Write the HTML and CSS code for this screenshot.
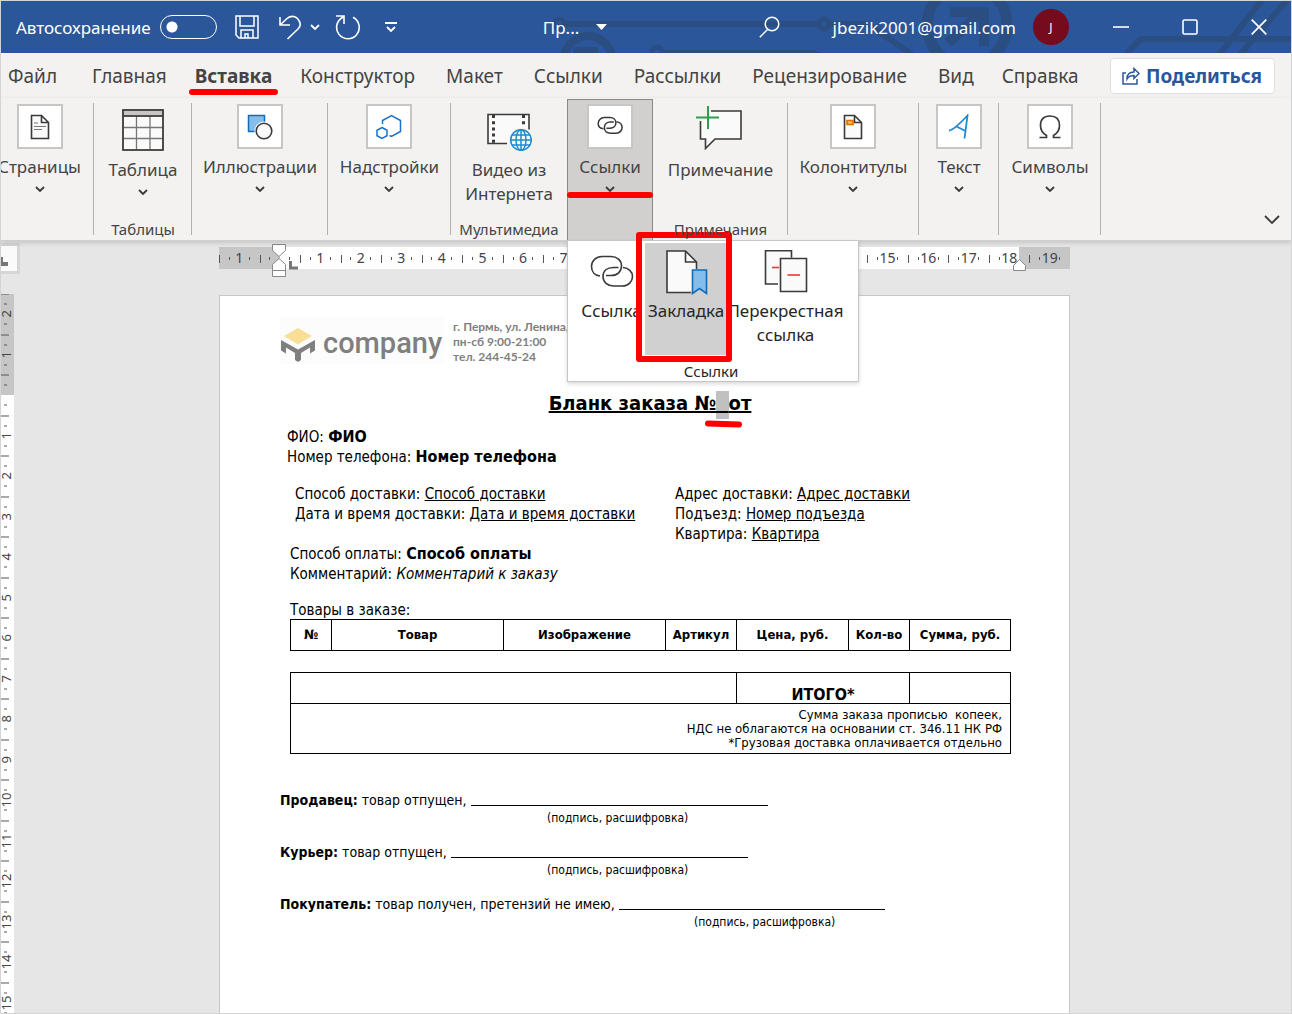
FILE: index.html
```html
<!DOCTYPE html>
<html lang="ru">
<head>
<meta charset="utf-8">
<meta name="viewport" content="width=device-width, initial-scale=1">
<title>Бланк заказа</title>
<link rel="stylesheet" href="styles.css">
</head>
<body>
<div class="app">
  <header class="titlebar">
    <svg class="circuit" width="760" height="52" viewBox="531 1 760 52" fill="none" stroke="#2a4d82" stroke-width="6" aria-hidden="true">
      <circle cx="559" cy="24" r="5" stroke-width="4"/><path d="M565 24H818"/><circle cx="824" cy="24" r="5" stroke-width="5"/><path d="M830 24h38l46 32"/>
      <circle cx="588" cy="60" r="24" stroke-width="8"/><path d="M573 50h25"/>
      <circle cx="657" cy="52" r="5" stroke-width="5"/><path d="M663 53H812q6 0 12 6"/>
      <circle cx="967" cy="25" r="40" stroke-width="11"/>
      <path d="M948 43L980 13M950 12h34v34" stroke-width="10"/>
      <path d="M1124 56l17-17H1291M1218 56L1262 0M1239 56L1287 0"/>
    </svg>
    <div class="quick">
      <label class="autosave">Автосохранение <input type="checkbox" class="toggle"></label>
      <button class="icon-btn save" aria-label="Сохранить"><svg width="24" height="24" viewBox="0 0 24 24" fill="none" stroke="#fff" stroke-width="1.5"><path d="M1 1h22v22H4l-3-3zM5 1v10h14V1M6 23v-8h12v8M10 23v-4h3v4"/></svg></button>
      <button class="icon-btn undo" aria-label="Отменить"><svg width="23" height="25" viewBox="0 0 23 25" fill="none" stroke="#fff" stroke-width="1.6"><path d="M1 2v8h10M1 10L8 3.500Q13 -.5 18 3Q24 9 19 14L8.500 24"/></svg></button>
      <button class="icon-btn more" aria-label="Список отмены"><svg width="10" height="7" viewBox="0 0 10 7" fill="none" stroke="#fff" stroke-width="1.8"><path d="M1 1l4 4 4-4"/></svg></button>
      <button class="icon-btn redo" aria-label="Повторить"><svg width="26" height="26" viewBox="0 0 26 26" fill="none" stroke="#fff" stroke-width="1.6"><path d="M1 2h8v8M8.500 3A11.300 11.300 0 1 0 18 3.300"/></svg></button>
      <button class="icon-btn customize" aria-label="Настройка панели"><svg width="12" height="10" viewBox="0 0 12 10" fill="none" stroke="#fff" stroke-width="1.8"><path d="M0 1h12M2 5l4 4 4-4"/></svg></button>
    </div>
    <button class="doc-title">Пр...<svg width="11" height="6" viewBox="0 0 11 6" fill="#fff"><path d="M0 0h11L5.500 6z"/></svg></button>
    <div class="account">
      <button class="icon-btn search" aria-label="Поиск"><svg width="21" height="22" viewBox="0 0 21 22" fill="none" stroke="#fff" stroke-width="1.5"><circle cx="13" cy="8" r="6.800"/><path d="M8.500 13.500L.8 21.200"/></svg></button>
      <span class="email">jbezik2001@gmail.com</span>
      <button class="avatar">J</button>
      <button class="icon-btn win-min" aria-label="Свернуть"><svg width="16" height="16" viewBox="0 0 16 16" stroke="#fff" stroke-width="1.6"><path d="M0 8h16"/></svg></button>
      <button class="icon-btn win" aria-label="Развернуть"><svg width="16" height="16" viewBox="0 0 16 16" fill="none" stroke="#fff" stroke-width="1.6"><rect x="1" y="1" width="14" height="14" rx="1.500"/></svg></button>
      <button class="icon-btn win" aria-label="Закрыть"><svg width="16" height="16" viewBox="0 0 16 16" stroke="#fff" stroke-width="1.700"><path d="M.7.7l14.600 14.600M15.300.7L.7 15.300"/></svg></button>
    </div>
  </header>

  <nav class="tabs">
    <button class="tab first">Файл</button>
    <button class="tab">Главная</button>
    <button class="tab active">Вставка</button>
    <button class="tab">Конструктор</button>
    <button class="tab wide">Макет</button>
    <button class="tab wide">Ссылки</button>
    <button class="tab wide">Рассылки</button>
    <button class="tab wide">Рецензирование</button>
    <button class="tab wide">Вид</button>
    <button class="tab">Справка</button>
    <button class="share"><svg width="18" height="18" viewBox="0 0 18 18" fill="none" stroke="#2b579a" stroke-width="1.500"><path d="M4 6H1v11h14v-5M5 12q0-7 7-7V1.500l5 5-5 5V8.500q-5 0-7 3.500z"/></svg>Поделиться</button>
  </nav>

  <div class="ribbon">
    <section class="group g-pages"><button class="cmd">
      <span class="box"><svg width="24" height="26" viewBox="0 0 24 26" fill="#fafafa" stroke="#3b3a39" stroke-width="1.6"><path d="M3.500 1.500h10l7 7v16h-17zM13.500 1.500v7h7"/><path d="M6 9h4M6 12.500h12M6 15.500h8" stroke="#797775" stroke-width="1.200"/></svg></span>
      <span>Страницы</span><svg class="chev" viewBox="0 0 10 6"><path d="M1 1l4 4 4-4"/></svg></button></section>
    <section class="group g-table"><button class="cmd big">
      <svg width="42" height="42" viewBox="0 0 42 42" fill="#fafafa" stroke="#797775" stroke-width="1.300"><path d="M1 1h40v40H1z"/><path d="M1 1h40v6H1z" fill="#c8c6c4"/><path d="M14.500 7v34M28 7v34M1 18.500h40M1 29.500h40"/><path d="M1 1h40v40H1zM1 7h40" fill="none" stroke="#3b3a39" stroke-width="1.600"/></svg>
      <span>Таблица</span><svg class="chev" viewBox="0 0 10 6"><path d="M1 1l4 4 4-4"/></svg></button><h2>Таблицы</h2></section>
    <section class="group g-illus"><button class="cmd">
      <span class="box"><svg width="26" height="26" viewBox="0 0 26 26"><path d="M1.500 1.500h16v16h-16z" fill="#83beec" stroke="#0f6cbd" stroke-width="1.500"/><circle cx="17" cy="17" r="9.500" fill="#fff"/><circle cx="17" cy="17" r="7.800" fill="#fafafa" stroke="#3b3a39" stroke-width="1.600"/></svg></span>
      <span>Иллюстрации</span><svg class="chev" viewBox="0 0 10 6"><path d="M1 1l4 4 4-4"/></svg></button></section>
    <section class="group g-addins"><button class="cmd">
      <span class="box"><svg width="26" height="26" viewBox="0 0 26 26" fill="none" stroke="#1a73c8" stroke-width="1.500"><path d="M6.500 10V6.500L15.500 1.500l9 5v11l-9 5-2-1M6 13.500l5 2.800v5.400l-5 2.800-5-2.800v-5.400z"/></svg></span>
      <span>Надстройки</span><svg class="chev" viewBox="0 0 10 6"><path d="M1 1l4 4 4-4"/></svg></button></section>
    <section class="group g-media"><button class="cmd big">
      <svg width="46" height="42" viewBox="0 0 46 42" fill="none"><path d="M21 34.500H2V5.500h41v15" fill="#fafafa" stroke="#3b3a39" stroke-width="1.600"/><path d="M7.500 6v29M37.500 6v11" stroke="#3b3a39" stroke-width="3" stroke-dasharray="3 3.200"/><circle cx="35" cy="31" r="12" fill="#f3f2f1"/><g stroke="#1e8bcd" stroke-width="1.500"><circle cx="35" cy="31" r="10.300" fill="#fafafa"/><ellipse cx="35" cy="31" rx="5" ry="10.300"/><path d="M35 20.500v21M24.500 31h21M26 26h18M26 36h18"/></g></svg>
      <span>Видео из<br>Интернета</span></button><h2>Мультимедиа</h2></section>
    <section class="group g-links"><button class="cmd" aria-expanded="true">
      <span class="box"><svg width="26" height="26" viewBox="0 0 44 44" fill="none" stroke="#3b3a39" stroke-width="2.600"><path d="M11 25C5 24.500 2 20.500 2 16S6 6 12 6h10c6 0 10 4 10 9s-4 9-10 9h-6"/><path d="M33 13c5.500.5 9.500 4.500 9.500 9.500s-4 10-10 10h-10c-6 0-10-4-10-9.500s4-9.500 10-9.500h6"/></svg></span>
      <span>Ссылки</span><svg class="chev" viewBox="0 0 10 6"><path d="M1 1l4 4 4-4"/></svg></button>
      <i class="mark"></i>
      <div class="popup">
        <div class="popup-items">
          <button class="item link"><svg width="44" height="44" viewBox="0 0 44 44" fill="none" stroke="#3b3a39" stroke-width="1.600"><path d="M10 26C5 25.500 1.500 22 1.500 16.500S6 6.500 12 6.500h9c6 0 10.500 4 10.500 9.500s-4 9.500-10.500 9.500h-5"/><path d="M33 17.500c5.500.5 9.500 4 9.500 9s-4 9.500-10 9.500h-9c-6 0-10.500-4-10.500-9.500s4-9 10.500-9h5"/></svg><span>Ссылка</span></button>
          <button class="item bookmark"><svg width="44" height="46" viewBox="0 0 44 46"><path d="M3 2h19l10 11V43H3z" fill="#fafafa"/><path d="M27 43.500H3V2h18.500l11 11V20M21.500 2v11h11" fill="none" stroke="#3b3a39" stroke-width="1.600"/><path d="M28.500 21h14v23.500l-7-5-7 5z" fill="#83beec" stroke="#0f6cbd" stroke-width="1.600"/></svg><span>Закладка</span></button>
          <button class="item cross"><svg width="44" height="44" viewBox="0 0 44 44" fill="#fafafa" stroke="#3b3a39" stroke-width="1.600"><path d="M14 34H1.500V.8h26v7"/><path d="M8 17.500h7" stroke="#e53935"/><path d="M16.500 8.500h26v33h-26z"/><path d="M23.500 25H36" stroke="#e53935"/></svg><span>Перекрестная<br>ссылка</span></button>
        </div>
        <div class="popup-title">Ссылки</div>
        <i class="frame"></i>
      </div>
    </section>
    <section class="group g-comment"><button class="cmd big">
      <svg width="52" height="44" viewBox="0 0 52 44" fill="none"><path d="M5.500 15v18h5v9.500l9.500-9.500H46V5H16" fill="#fafafa" stroke="#3b3a39" stroke-width="1.600"/><path d="M1 1h14v13H1z" fill="#f3f2f1" stroke="none"/><path d="M13 0v23M1 11.500h23" stroke="#2f9e4f" stroke-width="2"/></svg>
      <span>Примечание</span></button><h2>Примечания</h2></section>
    <section class="group g-header"><button class="cmd">
      <span class="box"><svg width="24" height="26" viewBox="0 0 24 26" fill="#fafafa" stroke="#3b3a39" stroke-width="1.600"><path d="M3.500 1.500h10l7 7v16h-17zM13.500 1.500v7h7"/><path d="M6 6.500h6v4H6z" fill="#fbb56b" stroke="#e06c00"/></svg></span>
      <span>Колонтитулы</span><svg class="chev" viewBox="0 0 10 6"><path d="M1 1l4 4 4-4"/></svg></button></section>
    <section class="group g-text"><button class="cmd">
      <span class="box"><svg width="26" height="26" viewBox="0 0 26 26" fill="none" stroke="#1e8bcd" stroke-width="1.800"><path d="M3 16.500Q8 16 21.500 1.500L18.500 24.500M10.500 12.500l9 4.500"/></svg></span>
      <span>Текст</span><svg class="chev" viewBox="0 0 10 6"><path d="M1 1l4 4 4-4"/></svg></button></section>
    <section class="group g-symbols"><button class="cmd">
      <span class="box"><svg width="24" height="26" viewBox="0 0 24 26" fill="none" stroke="#3b3a39" stroke-width="1.700"><path d="M1.500 23.500h7v-2Q2.500 18 2.500 11.500 2.500 2 12 2t9.500 9.500q0 6.500-6 10v2h7"/></svg></span>
      <span>Символы</span><svg class="chev" viewBox="0 0 10 6"><path d="M1 1l4 4 4-4"/></svg></button></section>
    <button class="collapse" aria-label="Свернуть ленту"><svg width="16" height="10" viewBox="0 0 16 10" fill="none" stroke="#3b3a39" stroke-width="1.800"><path d="M1 1l7 7 7-7"/></svg></button>
  </div>

  <main class="workspace">
    <div class="tabstop"><svg width="8" height="9" viewBox="0 0 8 9"><path d="M0 0v7h7" fill="none" stroke="#797775" stroke-width="4"/></svg></div>
    <div class="ruler">
      <span class="out">1</span><span class="zero"></span><span>1</span><span>2</span><span>3</span><span>4</span><span>5</span><span>6</span><span>7</span><span>8</span><span>9</span><span>10</span><span>11</span><span>12</span><span>13</span><span>14</span><span>15</span><span>16</span><span>17</span><span class="edge">18</span><span class="out">19</span>
      <svg class="indent-left" width="14" height="34" viewBox="0 0 14 34" fill="#fff" stroke="#8a8886"><path d="M.5.5h13v6l-6.500 6-6.500-6zM.5 26.500v-6l6.500-6 6.500 6v6zM.5 26.500h13v6H.5z"/></svg>
      <svg class="tab-left" width="9" height="9" viewBox="0 0 9 9"><path d="M1.500 0v7H9" fill="none" stroke="#797775" stroke-width="3"/></svg>
      <svg class="indent-right" width="13" height="12" viewBox="0 0 13 12" fill="#fff" stroke="#8a8886"><path d="M.5 11.500v-5l6-6 6 6v5z"/></svg>
    </div>
    <div class="vruler"><div class="vscale">
      <span class="out">2</span><span class="out">1</span><span class="vzero"></span><span>1</span><span>2</span><span>3</span><span>4</span><span>5</span><span>6</span><span>7</span><span>8</span><span>9</span><span>10</span><span>11</span><span>12</span><span>13</span><span>14</span><span>15</span>
    </div></div>

    <article class="page">
      <div class="letterhead">
        <div class="logo"><svg width="34" height="34" viewBox="0 0 34 34"><path d="M17 0l14 8-14 8.500L3 8z" fill="#f9df96"/><path d="M0 12l17 9.500L34 12v10.500l-5 3v-6l-9 5.500v7l-3 2-3-2v-7l-9-5.500v6l-5-3z" fill="#7f7f7f"/></svg><span>company</span></div>
        <address>г. Пермь, ул. Ленина, 5<br>пн-сб 9:00-21:00<br>тел. 244-45-24</address>
      </div>
      <h1>Бланк заказа №<span class="sel">&nbsp;&nbsp;</span>от<svg class="pen" width="37" height="8" viewBox="0 0 37 8"><path d="M3 3.500L34 4.500" stroke="#f00" stroke-width="6" stroke-linecap="round"/></svg></h1>
      <div class="client">ФИО: <b>ФИО</b><br>Номер телефона: <b>Номер телефона</b></div>
      <div class="delivery">
        <div>Способ доставки: <u>Способ доставки</u><br>Дата и время доставки: <u>Дата и время доставки</u></div>
        <div>Адрес доставки: <u>Адрес доставки</u><br>Подъезд: <u>Номер подъезда</u><br>Квартира: <u>Квартира</u></div>
      </div>
      <div class="order">
        <p>Способ оплаты: <b>Способ оплаты</b><br>Комментарий: <i>Комментарий к заказу</i></p>
        <p class="goods-title">Товары в заказе:</p>
        <table class="goods">
          <colgroup><col class="c1"><col class="c2"><col class="c3"><col class="c4"><col class="c5"><col class="c6"><col class="c7"></colgroup>
          <tr><th>№</th><th>Товар</th><th>Изображение</th><th>Артикул</th><th>Цена, руб.</th><th>Кол-во</th><th>Сумма, руб.</th></tr>
        </table>
        <table class="total">
          <colgroup><col class="t1"><col class="t2"><col class="t3"></colgroup>
          <tr class="sum"><td></td><th>ИТОГО*</th><td></td></tr>
          <tr class="notes"><td colspan="3">Сумма заказа прописью &nbsp;копеек,<br>НДС не облагаются на основании ст. 346.11 НК РФ<br>*Грузовая доставка оплачивается отдельно</td></tr>
        </table>
      </div>
      <div class="sign"><p><b>Продавец:</b>&nbsp;товар отпущен,&nbsp;<span class="line"></span></p><small>(подпись, расшифровка)</small></div>
      <div class="sign"><p><b>Курьер:</b>&nbsp;товар отпущен,&nbsp;<span class="line"></span></p><small>(подпись, расшифровка)</small></div>
      <div class="sign buyer"><p><b>Покупатель:</b>&nbsp;товар получен, претензий не имею,&nbsp;<span class="line"></span></p><small>(подпись, расшифровка)</small></div>
    </article>
  </main>
</div>
</body>
</html>
```
FILE: styles.css
```css
* { box-sizing: border-box; }
body { margin: 0; font-family: "Noto Sans", "Open Sans", sans-serif; color: #444; }
button { font: inherit; color: inherit; background: none; border: 0; padding: 0; margin: 0; }
svg { display: block; flex: none; }
p, h1, h2 { margin: 0; }

.app { height: 100vh; display: flex; flex-direction: column; overflow: hidden; border: 1px solid #d4d4d4; background: #e6e6e6; }

/* title bar */
.titlebar { position: relative; flex: none; height: 52px; display: flex; align-items: center; background: #2b579a; color: #fff; font-size: 17px; }
.circuit { position: absolute; right: 0; top: 0; }
.quick { flex: 0 0 42%; display: flex; align-items: center; padding-left: 15px; }
.autosave { display: flex; align-items: center; gap: 9px; }
.toggle { appearance: none; width: 57px; height: 24px; margin: 0; border: 1px solid #fff; border-radius: 12px; background: radial-gradient(circle at 11px 11px, #fff 5px, transparent 6px); }
.icon-btn { position: relative; flex: none; }
.save { margin-left: 18px; }
.undo { margin-left: 20px; }
.more { margin-left: 8px; }
.redo { margin-left: 15px; }
.customize { margin-left: 24px; }
.doc-title { position: relative; display: flex; align-items: center; gap: 17px; }
.account { position: relative; margin-left: auto; display: flex; align-items: center; padding-right: 24px; }
.email { margin-left: 53px; }
.avatar { width: 36px; height: 36px; margin-left: 17px; border-radius: 50%; background: #750b1c; font-size: 12px; }
.win-min { margin-left: 44px; }
.win { margin-left: 53px; }

/* tabs */
.tabs { flex: none; height: 45px; display: flex; align-items: center; gap: 28px; padding: 0 16px 0 7px; background: #f3f2f1; font-size: 19px; }
.tab { position: relative; line-height: 26px; }
.tab.first { margin-right: 7px; }
.tab.wide { margin-left: 3px; }
.tab.active { font-weight: 700; }
.tab.active::after { content: ""; position: absolute; left: -6px; right: -6px; bottom: -6px; height: 6px; border-radius: 3px; background: #f00; }
.share { margin-left: auto; height: 36px; display: flex; align-items: center; gap: 6px; padding: 0 12px 0 11px; border: 1px solid #e1dfdd; border-radius: 4px; background: #fff; color: #2b579a; font-weight: 700; }

/* ribbon */
.ribbon { position: relative; z-index: 1; flex: none; height: 143px; display: flex; background: #f3f2f1; border-bottom: 1px solid #d2d0ce; box-shadow: 0 2px 5px rgba(0, 0, 0, .15); font-size: 17px; }
.group { position: relative; flex: none; display: flex; flex-direction: column; align-items: center; margin: 5px 0; }
.group::after { content: ""; position: absolute; right: 0; top: 0; bottom: 0; width: 1px; background: #b3b0ad; }
.cmd { display: flex; flex-direction: column; align-items: center; line-height: 24px; padding-top: 1px; white-space: nowrap; }
.box { display: flex; align-items: center; justify-content: center; width: 46px; height: 45px; margin-bottom: 6px; border: 2px solid #c8c6c4; background: #fff; }
.cmd.big { padding-top: 6px; }
.cmd.big > svg:first-child { height: 42px; margin-bottom: 7px; }
.chev { width: 10px; height: 6px; margin-top: 7px; fill: none; stroke: #3b3a39; stroke-width: 1.8; }
.group h2 { position: absolute; bottom: -3px; font-size: 15px; line-height: 18px; font-weight: 400; }
.g-pages { width: 93px; padding-right: 16px; }
.g-table { width: 98px; }
.g-illus { width: 136px; }
.g-addins { width: 123px; }
.g-media { width: 116px; }
.g-links { width: 86px; margin: 1px 0 0; padding-top: 3px; background: #d2d0ce; border: 1px solid #8a8886; border-bottom: 0; }
.g-links::after, .g-media::after { display: none; }
.g-comment { width: 135px; }
.g-comment .cmd.big { padding-top: 3px; }
.g-comment .cmd.big > svg:first-child { height: 44px; margin-bottom: 8px; }
.g-header { width: 131px; }
.g-text { width: 80px; }
.g-symbols { width: 102px; }
.collapse { margin: 0 11px 15px auto; align-self: flex-end; }
.mark { position: absolute; top: 92px; left: -1px; right: -1px; height: 6px; border-radius: 3px; background: #f00; }

/* drop-down of the links group */
.popup { position: absolute; top: 140px; left: -1px; width: 292px; height: 142px; background: #fff; border: 1px solid #c8c6c4; box-shadow: 0 2px 4px rgba(0, 0, 0, .15); color: #262626; }
.popup-items { display: grid; grid-template-columns: 77px 82px 1fr; padding-top: 2px; }
.item { display: flex; flex-direction: column; align-items: center; height: 112px; padding-top: 6px; line-height: 24px; white-space: nowrap; }
.item svg { height: 46px; margin-bottom: 4px; }
.item.link { padding-left: 10px; }
.item.bookmark { background: #d0d0d0; }
.item.cross { padding-right: 14px; }
.popup-title { font-size: 15px; line-height: 32px; text-align: center; padding-right: 4px; }
.frame { position: absolute; left: 68px; top: -9px; width: 96px; height: 130px; border: 6px solid #f00; border-radius: 3px; }

/* workspace */
.workspace { flex: 1; min-height: 0; display: grid; grid-template-columns: 13px 1fr 16px; grid-template-rows: 53px 1fr; justify-items: center; overflow: hidden; }
.tabstop { justify-self: start; width: 19px; height: 31px; margin-top: 2px; padding: 11px 0 0; border: 3px solid #d6d6d6; border-left: 0; background: #fafafa; }
.ruler { position: relative; width: 851px; height: 21px; margin-top: 6px; display: grid; grid-template-columns: repeat(21, 1fr); font-size: 14px; line-height: 22px; text-align: center; }
.ruler span { background: linear-gradient(#555, #555) 0 8px / 1px 8px no-repeat, linear-gradient(#555, #555) 25% 10px / 1px 3px no-repeat, linear-gradient(#555, #555) 75% 10px / 1px 3px no-repeat, #fff; }
.ruler .out { background-color: #c6c6c6; }
.ruler .zero { background: linear-gradient(#555, #555) 0 8px / 1px 8px no-repeat, linear-gradient(#555, #555) 25% 10px / 1px 3px no-repeat, linear-gradient(#555, #555) 75% 10px / 1px 3px no-repeat, linear-gradient(90deg, #c6c6c6 50%, #fff 50%); }
.ruler .edge { background: linear-gradient(#555, #555) 0 8px / 1px 8px no-repeat, linear-gradient(#555, #555) 25% 10px / 1px 3px no-repeat, linear-gradient(90deg, #fff 75%, #c6c6c6 75%); }
.indent-left { position: absolute; left: 53px; top: -3px; }
.tab-left { position: absolute; left: 70px; top: 14px; }
.indent-right { position: absolute; left: 794px; top: 12px; }
.vruler { grid-column: 1; width: 13px; min-height: 0; height: 100%; overflow: hidden; }
.vscale { height: 729px; display: grid; grid-template-columns: 13px; grid-template-rows: repeat(18, 1fr); font-size: 13px; line-height: 10px; text-align: center; }
.vscale span { writing-mode: vertical-rl; transform: rotate(180deg); background: linear-gradient(#555, #555) 5px 100% / 8px 1px no-repeat, linear-gradient(#555, #555) 7px 25% / 3px 1px no-repeat, linear-gradient(#555, #555) 7px 75% / 3px 1px no-repeat, #fff; }
.vscale .out { background-color: #c6c6c6; }
.vscale .vzero { background: linear-gradient(#555, #555) 5px 100% / 8px 1px no-repeat, linear-gradient(#555, #555) 7px 25% / 3px 1px no-repeat, linear-gradient(#555, #555) 7px 75% / 3px 1px no-repeat, linear-gradient(#fff 50%, #c6c6c6 50%); }

/* document */
.page { grid-column: 2; width: 851px; min-height: 900px; margin-top: 1px; padding: 21px 49px 0 60px; border: 1px solid #c6c6c6; background: #fff; color: #000; font: 15px/20px "DejaVu Sans Condensed", "DejaVu Sans", sans-serif; }
.letterhead { display: flex; height: 47px; }
.logo { width: 164px; display: flex; align-items: center; gap: 8px; padding: 8px 0 0 1px; background: #fcfcfc; color: #7f7f7f; font: 500 29px/32px Roboto, sans-serif; }
.logo span { margin-top: -4px; }
.letterhead address { margin-left: 9px; padding-top: 2px; color: #7f7f7f; font: 700 12px/15px Lato, sans-serif; white-space: nowrap; }
.page h1 { position: relative; width: max-content; margin: 25px auto 0; font-size: 20px; line-height: 28px; text-decoration: underline; }
.sel { padding-bottom: 4px; background: #c0c0c0; }
.pen { position: absolute; right: 9px; bottom: -11px; }
.client { margin: 10px 0 0 7px; }
.client b, .order b { font-size: 16px; }
.delivery { display: grid; grid-template-columns: 380px 1fr; margin: 17px 0 0 15px; }
.order { margin-left: 10px; }
.goods-title { margin: 16px 0 -1px; }
.page table { width: 721px; table-layout: fixed; border-collapse: collapse; }
.page th, .page td { border: 1px solid #000; padding: 0; }
.goods th { height: 31px; font-size: 13px; }
.c1 { width: 41px; } .c2 { width: 172px; } .c3 { width: 162px; } .c4 { width: 71px; } .c5 { width: 112px; } .c6 { width: 61px; } .c7 { width: 101px; }
.t1 { width: 446px; } .t2 { width: 173px; } .t3 { width: 101px; }
.page .total { margin-top: 21px; }
.total .sum th { height: 31px; font-size: 16px; line-height: 16px; vertical-align: bottom; }
.total .notes td { height: 50px; padding-right: 8px; font-size: 13px; line-height: 14px; text-align: right; }
.sign { width: max-content; margin-top: 16px; font-size: 14px; line-height: 18px; text-align: left; }
.order + .sign { margin-top: 37px; }
.sign p { display: flex; }
.sign .line { width: 297px; height: 15px; border-bottom: 1px solid #000; }
.sign small { display: block; margin-left: 267px; font-size: 12px; }
.buyer .line { width: 266px; }
.buyer small { margin-left: 414px; }
```
